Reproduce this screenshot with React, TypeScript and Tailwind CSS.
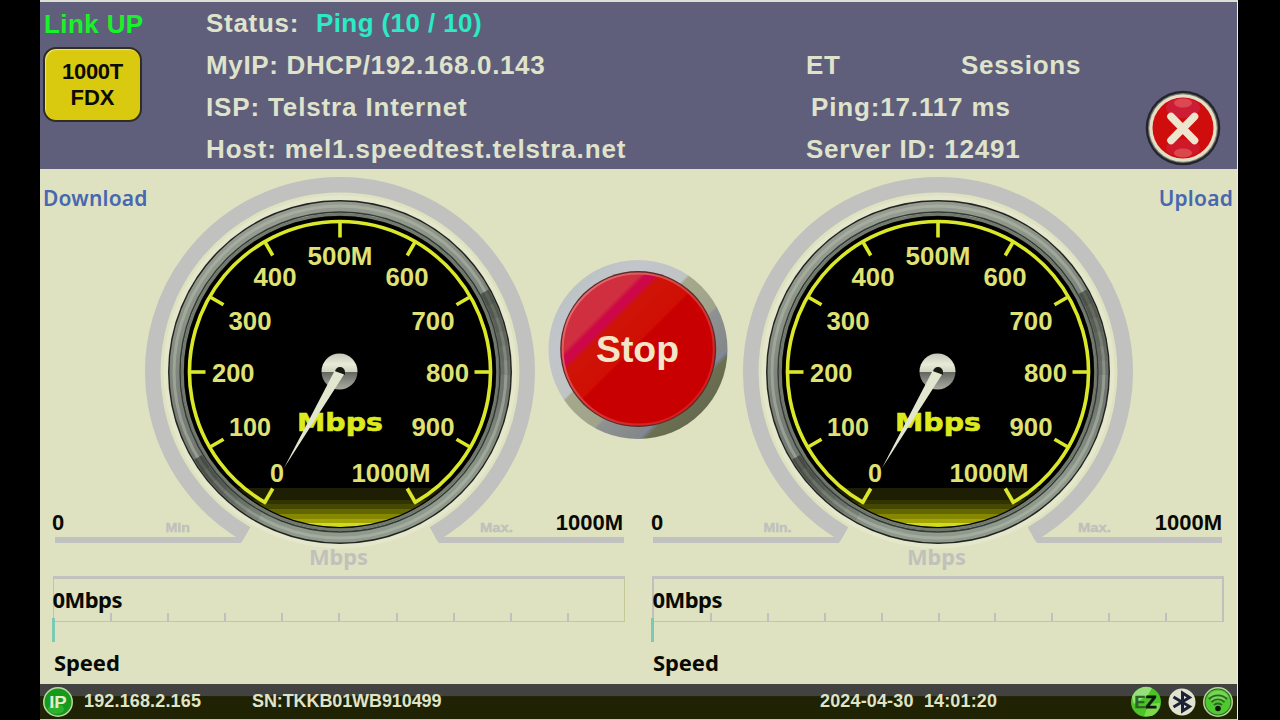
import type { ReactNode } from "react";

const SANS = "font-['Liberation_Sans',Arial,sans-serif]";
const NOTO = "font-['Noto_Sans','Open_Sans',sans-serif]";

// scale labels: text, left x, baseline, width
const scaleLabels: [string, number, number, number][] = [
  ["0", 269.5, 481.5, 14],
  ["100", 228.5, 435.5, 42],
  ["200", 211.5, 381.5, 42.5],
  ["300", 228, 329.5, 43],
  ["400", 253, 286, 43],
  ["500M", 307, 265, 65],
  ["600", 385, 286, 43],
  ["700", 411, 329.5, 43],
  ["800", 425.5, 381.5, 43],
  ["900", 411, 435.5, 43],
  ["1000M", 351, 481.5, 79],
];

const CX = 340;
const CY = 372;

// 0deg points straight up, clockwise
const polar = (r: number, deg: number) => {
  const a = (deg * Math.PI) / 180;
  return `${(CX + r * Math.sin(a)).toFixed(2)} ${(CY - r * Math.cos(a)).toFixed(2)}`;
};

const arc = (r: number, from: number, to: number) =>
  `M${polar(r, from)} A${r} ${r} 0 ${to - from > 180 ? 1 : 0} 1 ${polar(r, to)}`;

const ticks = Array.from({ length: 11 }, (_, i) => -150 + i * 30);
const shades = [0.5, 0.42, 0.34, 0.26, 0.18, 0.1];

const Gauge = ({ id, minLabel }: { id: string; minLabel: string }) => (
  <svg viewBox="40 169 598 405" className="block w-[598px] h-[405px]">
    <defs>
      <linearGradient id={`${id}-rim`} x1="0" y1="0" x2="0.3" y2="1">
        <stop offset="0" stopColor="#9b9f97" />
        <stop offset="0.25" stopColor="#8f978b" />
        <stop offset="0.55" stopColor="#7a8078" />
        <stop offset="0.8" stopColor="#6e746e" />
        <stop offset="1" stopColor="#8f998d" />
      </linearGradient>
      <linearGradient id={`${id}-hub`} x1="0" y1="0" x2="0" y2="1">
        <stop offset="0" stopColor="#c4c8b8" />
        <stop offset="0.3" stopColor="#e9ebd8" />
        <stop offset="0.5" stopColor="#d2d4c4" />
        <stop offset="0.52" stopColor="#63665f" />
        <stop offset="0.8" stopColor="#8d9189" />
        <stop offset="1" stopColor="#a9ad9f" />
      </linearGradient>
      <clipPath id={`${id}-face`}>
        <circle cx={CX} cy={CY} r="155" />
      </clipPath>
    </defs>

    {/* outer track and rails */}
    <circle cx={CX} cy={CY} r="174" fill="none" stroke="#e4e7cb" strokeWidth="5" />
    <path d={arc(187.2, -150, 150)} fill="none" stroke="#c1c1c0" strokeWidth="15.6" />
    <path d="M55 537H244L241 543H55ZM624 537H435L439 543H624Z" fill="#c1c1c0" />

    {/* metal rim */}
    <circle cx={CX} cy={CY} r="172" fill="#22251f" />
    <circle cx={CX} cy={CY} r="164.5" fill="none" stroke={`url(#${id}-rim)`} strokeWidth="12" />
    <circle cx={CX} cy={CY} r="166" fill="none" stroke="#b5bbac" strokeWidth="3" opacity="0.55" />
    {shades.map((o, i) => (
      <g key={i} fill="none" stroke="#1c2219" strokeWidth="9" opacity={o}>
        <path d={arc(165.5, 61 + i * 5, 66 + i * 5)} />
        <path d={arc(165.5, 234 - i * 5, 239 - i * 5)} />
      </g>
    ))}
    <circle cx={CX} cy={CY} r="160" fill="none" stroke="#343a33" strokeWidth="1.4" />
    <circle cx={CX} cy={CY} r="157.5" fill="none" stroke="#727a6e" strokeWidth="2.5" />
    <circle cx={CX} cy={CY} r="156" fill="#000" />

    <g clipPath={`url(#${id}-face)`}>
      <rect x="180" y="488" width="320" height="12" fill="#1d1e04" />
      <rect x="180" y="500" width="320" height="4" fill="#323400" />
      <rect x="180" y="504" width="320" height="5" fill="#454800" />
      <rect x="180" y="509" width="320" height="5" fill="#636700" />
      <rect x="180" y="514" width="320" height="5" fill="#858800" />
      <rect x="180" y="519" width="320" height="4" fill="#a2a504" />
      <rect x="180" y="523" width="320" height="6" fill="#d3dc1c" />
    </g>

    <g fill="none" stroke="#dbe82a" strokeWidth="3.6">
      <path d={arc(150.5, -150.6, 150.6)} />
      {ticks.map((t) => (
        <path key={t} d={`M${polar(151, t)} L${polar(134.5, t)}`} />
      ))}
    </g>

    <g fill="#dfe173" fontSize="25" className={`font-bold ${SANS}`}>
      {scaleLabels.map(([label, x, y, w]) => (
        <text key={label} x={x + 0.5} y={y} textLength={w} lengthAdjust="spacingAndGlyphs">{label}</text>
      ))}
    </g>
    <text x="297" y="430.5" textLength="86" lengthAdjust="spacingAndGlyphs" fontSize="25" fill="#dcea1e" stroke="#dcea1e" strokeWidth="0.6" className="font-bold font-['DejaVu_Sans',sans-serif]">
      Mbps
    </text>

    {/* hub and needle */}
    <circle cx="339.5" cy="371.5" r="18" fill={`url(#${id}-hub)`} />
    <path d="M335 372a5 5 0 0 1 10 0v3l-5-2z" fill="#161a12" />
    <path d="M334.5 371L344 374.5L284 468Z" fill="#e4e7cf" />

    <g fill="#c0c1bc" className="font-bold">
      <text x="165.5" y="532" fontSize="12.5" textLength={minLabel.length > 3 ? 28 : 24.5} lengthAdjust="spacingAndGlyphs" className={SANS} stroke="#c0c1bc" strokeWidth="0.4">{minLabel}</text>
      <text x="480" y="532" fontSize="12.5" textLength="33" lengthAdjust="spacingAndGlyphs" className={SANS} stroke="#c0c1bc" strokeWidth="0.4">Max.</text>
      <text x="309" y="565" fontSize="20.5" textLength="59" lengthAdjust="spacingAndGlyphs" className={NOTO}>Mbps</text>
    </g>
  </svg>
);

const AxisLabels = ({ right }: { right?: boolean }) => (
  <div className={`[grid-area:1/1] mt-[341px] flex justify-between pr-[15px] pl-[12px] text-[22px] leading-[26px] font-bold text-[#080903] ${SANS} ${right ? "relative left-[1px]" : ""}`}>
    <span>0</span>
    <span>1000M</span>
  </div>
);

const SpeedBar = ({ solid }: { solid?: boolean }) => (
  <div className={`w-[572px] ${solid ? "ml-[14px]" : "ml-[13px]"}`}>
    <div
      className={`flex h-[46px] border-t-[3px] border-b border-t-[#c1c1bf] border-b-[#c3c894] ${
        solid ? "border-x-2 border-x-[#c0c0bd]" : "border-x border-x-[#c3c894]"
      }`}
    >
      <div className={`w-0 whitespace-nowrap text-[22px] leading-[40px] font-bold text-[#080903] ${NOTO}`}>
        <span className="-ml-[1.5px] tracking-[-0.55px]">0Mbps</span>
      </div>
      <div className="flex flex-1 items-end pl-[1px]">
        {Array.from({ length: 10 }, (_, i) => (
          <div key={i} className={`h-2 flex-1 ${i < 9 ? "border-r-2 border-[#c0c0bd]" : ""}`} />
        ))}
      </div>
    </div>
    <div className="-mt-1 -ml-[1px] h-[24px] w-[3px] bg-[#7cc9b4]" />
    <div className={`mt-[5px] pl-px text-[22px] leading-[30px] font-bold tracking-[-0.1px] text-[#080903] ${NOTO}`}>Speed</div>
  </div>
);

const SpeedPanel = ({ id, title, right }: { id: string; title: string; right?: boolean }) => (
  <section className="w-[598px]">
    <div className="grid">
      <div className="[grid-area:1/1]">
        <Gauge id={id} minLabel={right ? "Min." : "Min"} />
      </div>
      <h2 className={`[grid-area:1/1] mt-[13px] px-[3px] text-[21px] leading-8 font-semibold tracking-[0.2px] text-[#4767b0] ${NOTO} ${right ? "text-right" : ""}`}>
        {title}
      </h2>
      <AxisLabels right={right} />
    </div>
    <div className="mt-[2px]">
      <SpeedBar solid={right} />
    </div>
  </section>
);

const StopButton = () => (
  <button className="absolute left-[508px] top-[90px] size-[180px] rounded-full">
    <svg viewBox="0 0 180 180" className="block size-full">
      <defs>
        <linearGradient id="stop-ring" x1="0" y1="0" x2="1" y2="1">
          <stop offset="0" stopColor="#b3c2c0" />
          <stop offset="0.25" stopColor="#c2c5ca" />
          <stop offset="0.43" stopColor="#c0c4c4" />
          <stop offset="0.44" stopColor="#a4a98a" />
          <stop offset="0.595" stopColor="#a0a38c" />
          <stop offset="0.605" stopColor="#8f9293" />
          <stop offset="0.74" stopColor="#858889" />
          <stop offset="0.75" stopColor="#8088a0" />
          <stop offset="0.77" stopColor="#6b7052" />
          <stop offset="1" stopColor="#5c6048" />
        </linearGradient>
        <linearGradient id="stop-red" x1="0" y1="0" x2="1" y2="1">
          <stop offset="0.26" stopColor="#d02f40" />
          <stop offset="0.28" stopColor="#cd0848" />
          <stop offset="0.315" stopColor="#cd0848" />
          <stop offset="0.33" stopColor="#cf1407" />
          <stop offset="0.475" stopColor="#cf0f04" />
          <stop offset="0.485" stopColor="#c90001" />
          <stop offset="1" stopColor="#c90001" />
        </linearGradient>
        <linearGradient id="stop-edge" x1="0" y1="0" x2="1" y2="1">
          <stop offset="0" stopColor="#ee7a80" />
          <stop offset="0.5" stopColor="#d83a3a" />
          <stop offset="1" stopColor="#d8100c" />
        </linearGradient>
      </defs>
      <circle cx="90" cy="90.5" r="89.5" fill="url(#stop-ring)" />
      <circle cx="90.2" cy="90" r="78" fill="#5b2b2b" />
      <circle cx="90.2" cy="90" r="75.6" fill="url(#stop-red)" stroke="url(#stop-edge)" strokeWidth="2" />
      <text x="48" y="103" textLength="83" lengthAdjust="spacingAndGlyphs" fontSize="36" fill="#f3e6c8" className={`font-bold ${SANS}`}>Stop</text>
    </svg>
  </button>
);

const CloseButton = () => (
  <button className="rounded-full">
    <svg viewBox="0 0 76 76" className="block size-[76px]">
      <circle cx="38" cy="38" r="37.3" fill="#22252c" />
      <circle cx="38" cy="38" r="35" fill="#77786f" />
      <circle cx="38" cy="38" r="33.8" fill="#e3dfc6" />
      <circle cx="38" cy="38" r="30.5" fill="#cf0d0c" />
      <ellipse cx="38" cy="18" rx="17" ry="10" fill="#cc2448" opacity="0.7" />
      <ellipse cx="38" cy="58" rx="17" ry="9" fill="#cb2140" opacity="0.6" />
      <ellipse cx="38" cy="13" rx="9" ry="4.5" fill="#e25a5c" opacity="0.7" />
      <ellipse cx="38" cy="63" rx="9" ry="4.5" fill="#e25a5c" opacity="0.7" />
      <path d="M26 26.5L49.5 50.5M49.5 26.5L26 50.5" stroke="#ece6cf" strokeWidth="7.6" strokeLinecap="round" />
    </svg>
  </button>
);

const IpIcon = () => (
  <svg viewBox="0 0 32 32" className="size-8">
    <circle cx="16" cy="16" r="15" fill="#bfd8a8" />
    <circle cx="16" cy="16" r="13.5" fill="#159a1c" />
    <ellipse cx="14" cy="23" rx="8" ry="5" fill="#3fc23a" opacity="0.6" />
    <text x="7.2" y="22" textLength="17.5" lengthAdjust="spacingAndGlyphs" fontSize="17" fill="#e4ecd0" className={`font-bold ${SANS}`}>IP</text>
  </svg>
);

const EzIcon = () => (
  <svg viewBox="0 0 32 32" className="size-8">
    <circle cx="16" cy="16" r="15" fill="#4cc327" />
    <path d="M2 11A15 15 0 0 1 22 2L18 9L4 18Z" fill="#a8e88e" opacity="0.8" />
    <path d="M14 30L19 18L30 17A15 15 0 0 1 22 30Z" fill="#8be052" opacity="0.8" />
    <text x="4.5" y="21.8" textLength="11" lengthAdjust="spacingAndGlyphs" fontSize="16" fill="#2d6424" stroke="#2d6424" strokeWidth="0.5" className={`font-bold ${SANS}`}>E</text>
    <text x="15.5" y="21.8" textLength="11" lengthAdjust="spacingAndGlyphs" fontSize="16" fill="#0d180c" stroke="#0d180c" strokeWidth="0.8" className={`font-bold ${SANS}`}>Z</text>
  </svg>
);

const BluetoothIcon = () => (
  <svg viewBox="0 0 32 32" className="size-8">
    <circle cx="16" cy="16" r="13.5" fill="#e0e3ce" />
    <path d="M7.5 11L23.5 20.5L16.5 25V7L23.5 11.5L7.5 21" fill="none" stroke="#1c2038" strokeWidth="3" strokeLinejoin="miter" />
  </svg>
);

const WifiIcon = () => (
  <svg viewBox="0 0 32 32" className="size-8">
    <circle cx="16" cy="16" r="15" fill="#b9d59b" />
    <circle cx="16" cy="16" r="13.5" fill="#256b1d" />
    <circle cx="16" cy="16" r="12.5" fill="#4fc832" />
    <path d="M6 10A12 12 0 0 1 26 10L22 15H10Z" fill="#86dc64" opacity="0.7" />
    <g fill="none" stroke="#2c6422" strokeWidth="1.9">
      <path d="M7 13A13 13 0 0 1 25 13" />
      <path d="M9.5 16.2A9 9 0 0 1 22.5 16.2" />
      <path d="M12 19.2A5.5 5.5 0 0 1 20 19.2" />
    </g>
    <circle cx="16" cy="22.5" r="2.8" fill="#0c160a" />
  </svg>
);

const Line = ({ children, className = "" }: { children: ReactNode; className?: string }) => (
  <div className={`h-[42px] whitespace-pre ${className}`}>{children}</div>
);

const Header = () => (
  <header className={`flex h-[167px] bg-[#5f5f7b] text-[26px] leading-[42px] font-bold text-[#dfe3cb] ${SANS}`}>
    <div className="w-[166px] pl-[3px]">
      <div className="h-[45px] pt-px pl-px tracking-[0.4px] text-[#17f22c]">Link UP</div>
      <div className="flex h-[75px] w-[99px] flex-col items-center justify-center rounded-[13px] border-2 border-[#302d26] bg-[#d9c90f] text-[22px] leading-[26px] text-[#0b0b02] shadow-[inset_1px_1px_1px_#f0e878]">
        <span className="tracking-[-0.3px]">1000T</span>
        <span>FDX</span>
      </div>
    </div>
    <div className="w-[600px]">
      <Line className="flex tracking-[0.7px]">
        <span className="w-[110px]">Status:</span>
        <span className="text-[#2ceac4] tracking-[0.4px]">Ping (10 / 10)</span>
      </Line>
      <Line className="tracking-[0.65px]">MyIP: DHCP/192.168.0.143</Line>
      <Line className="tracking-[0.85px]">ISP: Telstra Internet</Line>
      <Line className="tracking-[0.85px]">Host: mel1.speedtest.telstra.net</Line>
    </div>
    <div className="w-[339px] pt-[42px] tracking-[0.75px]">
      <Line className="flex">
        <span className="w-[155px]">ET</span>
        <span>Sessions</span>
      </Line>
      <Line className="pl-[5px] tracking-[0.85px]">Ping:17.117 ms</Line>
      <Line>Server ID: 12491</Line>
    </div>
    <div className="pt-[88px]">
      <CloseButton />
    </div>
  </header>
);

const Footer = () => (
  <footer className={`flex h-[36px] items-center border-b border-[#c9ccae] bg-linear-to-b from-[#424241] from-[33%] to-[#202204] to-[36%] pr-[3px] pl-[2px] text-[18px] font-bold text-[#dfe3c8] ${SANS}`}>
    <IpIcon />
    <span className="ml-[10px] w-[168px] tracking-[0.15px]">192.168.2.165</span>
    <span className="w-[568px] tracking-[-0.1px]">SN:TKKB01WB910499</span>
    <span className="whitespace-pre tracking-[0.15px]">2024-04-30  14:01:20</span>
    <div className="ml-auto flex gap-1">
      <EzIcon />
      <BluetoothIcon />
      <WifiIcon />
    </div>
  </footer>
);

export default function App() {
  return (
    <div className="h-[720px] w-[1280px] overflow-hidden bg-black pl-10">
      <div className="flex h-full w-[1198px] flex-col border-t-2 border-r border-t-[#dfe0d4] border-r-[#f0f0ea] bg-[#dee2c0]">
        <Header />
        <main className="relative flex flex-1">
          <SpeedPanel id="down" title="Download" />
          <SpeedPanel id="up" title="Upload" right />
          <StopButton />
        </main>
        <Footer />
      </div>
    </div>
  );
}
